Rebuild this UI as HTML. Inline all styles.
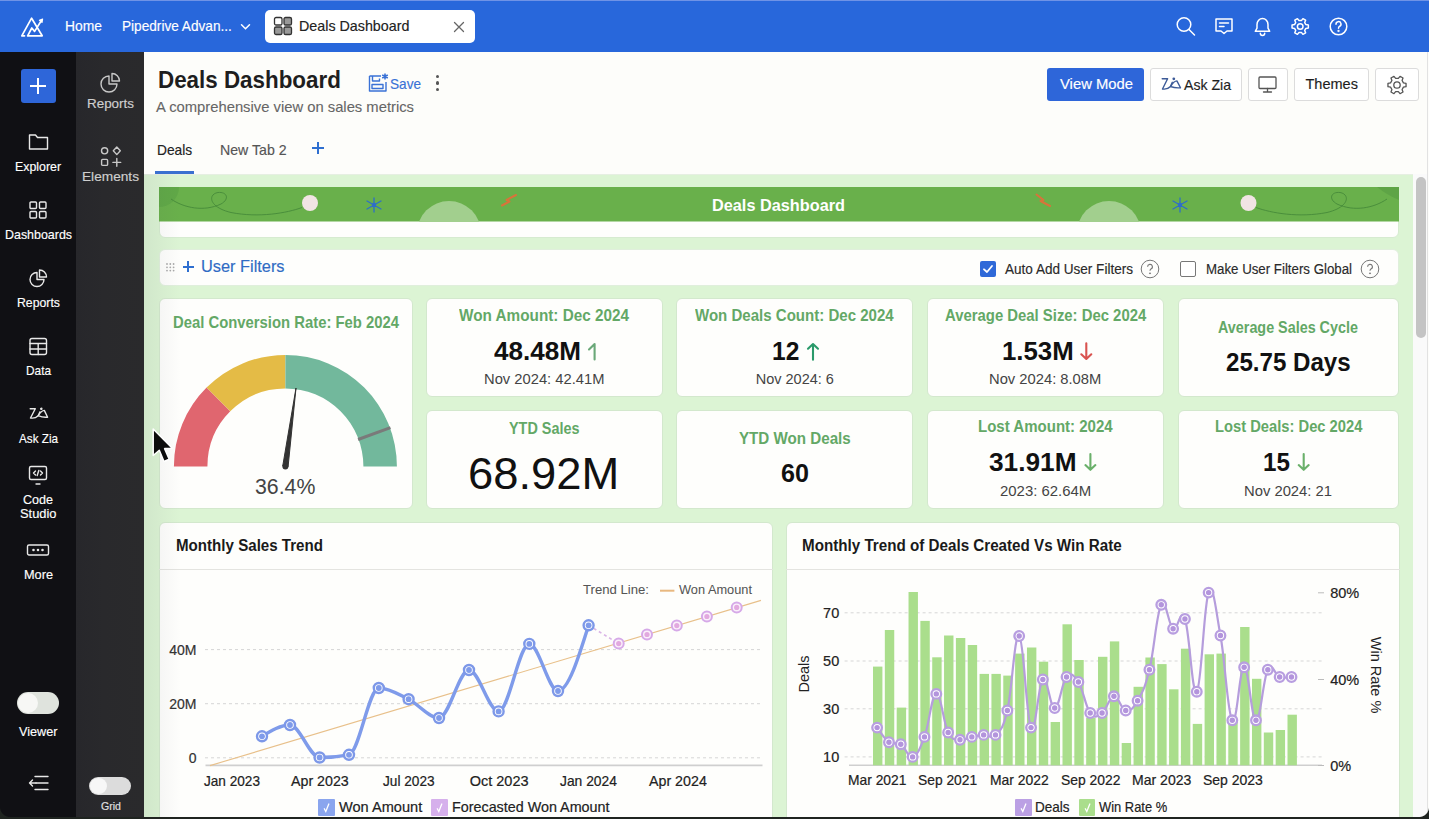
<!DOCTYPE html><html><head><meta charset="utf-8"><style>html,body{margin:0;padding:0;}body{width:1429px;height:819px;overflow:hidden;position:relative;background:#fdfdfa;font-family:"Liberation Sans", sans-serif;}.t{position:absolute;white-space:nowrap;transform-origin:0 0;}svg{position:absolute;overflow:visible;}</style></head><body>
<div style="position:absolute;left:0px;top:0px;width:1429px;height:52px;background:#2867db;"></div>
<div style="position:absolute;left:0px;top:0px;width:1429px;height:1px;background:#6f93e6;"></div>
<svg style="left:0;top:0" width="60" height="52" viewBox="0 0 60 52" fill="none" stroke="#fff" stroke-width="1.7" stroke-linejoin="round" stroke-linecap="round"><path d="M24.5 35.8 H21.8 L31.6 18.2 L42.2 35.8 H27.6 L31.8 28 L34.6 31.4 L40.5 22"/><path d="M39.4 20.3 L42.6 19 L42 22.3 Z" fill="#fff" stroke-width="1.2"/></svg>
<div class="t" style="left:64.50px;top:19.00px;font-size:14.20px;line-height:14.20px;color:#fff;transform:scaleX(0.9766);-webkit-text-stroke:0.15px #fff;">Home</div>
<div class="t" style="left:122.00px;top:19.00px;font-size:14.20px;line-height:14.20px;color:#fff;transform:scaleX(0.9608);-webkit-text-stroke:0.15px #fff;">Pipedrive Advan...</div>
<svg style="left:240px;top:23px" width="11" height="8" viewBox="0 0 11 8" fill="none" stroke="#fff" stroke-width="1.5" stroke-linecap="round"><path d="M1.5 1.8 L5.5 5.8 L9.5 1.8"/></svg>
<div style="position:absolute;left:265px;top:10px;width:210px;height:33px;background:#fff;border-radius:5px;"></div>
<svg style="left:273px;top:16px" width="21" height="21" viewBox="0 0 21 21" stroke="#333" stroke-width="1.3"><rect x="1.5" y="1.5" width="7.5" height="7.5" rx="1.6" fill="#fff"/><rect x="11" y="1.5" width="7.5" height="7.5" rx="1.6" fill="#999"/><rect x="1.5" y="11" width="7.5" height="7.5" rx="1.6" fill="#999"/><rect x="11" y="11" width="7.5" height="7.5" rx="1.6" fill="#999"/></svg>
<div class="t" style="left:299.30px;top:19.00px;font-size:14.20px;line-height:14.20px;color:#222;transform:scaleX(1.0069);-webkit-text-stroke:0.15px #222;">Deals Dashboard</div>
<svg style="left:453px;top:21px" width="12" height="12" viewBox="0 0 12 12" stroke="#666" stroke-width="1.3" stroke-linecap="round"><path d="M1.5 1.5 L10.5 10.5 M10.5 1.5 L1.5 10.5"/></svg>
<svg style="left:1170px;top:10px" width="190" height="34" viewBox="0 0 190 34" fill="none" stroke="#fff" stroke-width="1.5" stroke-linecap="round" stroke-linejoin="round"><circle cx="14" cy="14.5" r="6.8"/><path d="M19 19.5 L24.5 25"/><path d="M46 9 H62 V21 H57 L54 23.5 L51 21 H46 Z"/><path d="M49.5 13 H58.5 M49.5 16.5 H54"/><path d="M85.3 21.3 H99.7 L98 18.2 V14.5 A5.5 5.9 0 0 0 87 14.5 V18.2 Z"/><path d="M90.3 23.3 A2.2 2.2 0 0 0 94.7 23.3"/><path d="M135.89 14.59 L138.35 14.94 L138.35 18.06 L135.89 18.41 L134.70 20.47 L135.62 22.78 L132.93 24.34 L131.39 22.38 L129.01 22.38 L127.47 24.34 L124.78 22.78 L125.70 20.47 L124.51 18.41 L122.05 18.06 L122.05 14.94 L124.51 14.59 L125.70 12.53 L124.78 10.22 L127.47 8.66 L129.01 10.62 L131.39 10.62 L132.93 8.66 L135.62 10.22 L134.70 12.53 Z"/><circle cx="130.2" cy="16.5" r="2.8"/><circle cx="168.5" cy="16.5" r="8.3"/><path d="M166 14.2 A2.5 2.5 0 1 1 169.5 16.4 C168.7 16.9 168.5 17.3 168.5 18.3"/><circle cx="168.5" cy="21" r="0.4" fill="#fff"/></svg>
<div style="position:absolute;left:0px;top:52px;width:76px;height:767px;background:#101014;"></div>
<div style="position:absolute;left:76px;top:52px;width:68px;height:767px;background:linear-gradient(to right,#27272b,#29292c 40%,#2a2a2c);"></div>
<div style="position:absolute;left:21px;top:69px;width:35px;height:34px;background:#2e66d9;border-radius:3px;"></div>
<div style="position:absolute;left:30px;top:85px;width:16px;height:2px;background:#fff;"></div>
<div style="position:absolute;left:37px;top:78px;width:2px;height:16px;background:#fff;"></div>
<svg style="left:28px;top:133px" width="21" height="18" viewBox="0 0 21 18" fill="none" stroke="#e8e8e8" stroke-width="1.4" stroke-linejoin="round" stroke-linecap="round"><path d="M1.5 2 H7.5 L9.5 4.5 H19.5 V16 H1.5 Z"/></svg>
<div class="t" style="left:15.00px;top:160.00px;font-size:13.00px;line-height:13.00px;color:#fff;transform:scaleX(0.9503);-webkit-text-stroke:0.15px #fff;">Explorer</div>
<svg style="left:28px;top:200px" width="21" height="21" viewBox="0 0 21 21" fill="none" stroke="#e8e8e8" stroke-width="1.4" stroke-linejoin="round" stroke-linecap="round"><rect x="2" y="2" width="6.5" height="6.5" rx="1"/><rect x="11.5" y="2" width="6.5" height="6.5" rx="1"/><rect x="2" y="11.5" width="6.5" height="6.5" rx="1"/><rect x="11.5" y="11.5" width="6.5" height="6.5" rx="1"/></svg>
<div class="t" style="left:4.50px;top:228.00px;font-size:13.00px;line-height:13.00px;color:#fff;transform:scaleX(0.9558);-webkit-text-stroke:0.15px #fff;">Dashboards</div>
<svg style="left:28px;top:268px" width="21" height="21" viewBox="0 0 21 21" fill="none" stroke="#e8e8e8" stroke-width="1.4" stroke-linejoin="round" stroke-linecap="round"><path d="M9 4.5 A7 7 0 1 0 16 11.5 H9 Z"/><path d="M11.5 2 A7 7 0 0 1 18.5 9 H11.5 Z"/></svg>
<div class="t" style="left:16.50px;top:296.00px;font-size:13.00px;line-height:13.00px;color:#fff;transform:scaleX(0.9447);-webkit-text-stroke:0.15px #fff;">Reports</div>
<svg style="left:28px;top:336px" width="21" height="21" viewBox="0 0 21 21" fill="none" stroke="#e8e8e8" stroke-width="1.4" stroke-linejoin="round" stroke-linecap="round"><rect x="2" y="2.5" width="16.5" height="16" rx="2"/><path d="M2 7.5 H18.5 M2 13 H18.5 M10.2 7.5 V18.5"/></svg>
<div class="t" style="left:25.50px;top:364.00px;font-size:13.00px;line-height:13.00px;color:#fff;transform:scaleX(0.9104);-webkit-text-stroke:0.15px #fff;">Data</div>
<svg style="left:28px;top:405px" width="22" height="16" viewBox="0 0 22 16" fill="none" stroke="#e8e8e8" stroke-width="1.4" stroke-linejoin="round" stroke-linecap="round"><path d="M2.2 3.7 H7.3 L2.5 13 C5 13.4 8.3 12.6 10.2 10.7 L12 6.8"/><circle cx="13.3" cy="3.8" r="0.6" fill="#e8e8e8"/><path d="M10.2 10.7 Q13.5 5.5 16.3 5.4 Q17.8 8.5 19.6 12.2 Q14.5 12.6 10.2 10.7"/></svg>
<div class="t" style="left:18.50px;top:432.00px;font-size:13.00px;line-height:13.00px;color:#fff;transform:scaleX(0.8998);-webkit-text-stroke:0.15px #fff;">Ask Zia</div>
<svg style="left:27px;top:464px" width="22" height="22" viewBox="0 0 22 22" fill="none" stroke="#e8e8e8" stroke-width="1.4" stroke-linejoin="round" stroke-linecap="round"><rect x="2.5" y="2.5" width="17" height="13" rx="1.5"/><path d="M9 20 H13"/><path d="M8.5 7 L6.5 9 L8.5 11 M13.5 7 L15.5 9 L13.5 11 M11.8 6.5 L10.2 11.5"/></svg>
<div class="t" style="left:23.00px;top:493.00px;font-size:13.00px;line-height:13.00px;color:#fff;transform:scaleX(0.9653);-webkit-text-stroke:0.15px #fff;">Code</div>
<div class="t" style="left:19.75px;top:507.00px;font-size:13.00px;line-height:13.00px;color:#fff;transform:scaleX(0.9902);-webkit-text-stroke:0.15px #fff;">Studio</div>
<svg style="left:26px;top:543px" width="24" height="14" viewBox="0 0 24 14" fill="none" stroke="#e8e8e8" stroke-width="1.4" stroke-linejoin="round" stroke-linecap="round"><rect x="1.5" y="2" width="21" height="10" rx="1.5"/><circle cx="7.5" cy="7" r="0.6" fill="#e8e8e8"/><circle cx="12" cy="7" r="0.6" fill="#e8e8e8"/><circle cx="16.5" cy="7" r="0.6" fill="#e8e8e8"/></svg>
<div class="t" style="left:23.50px;top:568.00px;font-size:13.00px;line-height:13.00px;color:#fff;transform:scaleX(0.9791);-webkit-text-stroke:0.15px #fff;">More</div>
<div style="position:absolute;left:17px;top:692px;width:42px;height:22px;background:#dfe3dd;border-radius:11px;"></div>
<div style="position:absolute;left:18px;top:693px;width:20px;height:20px;background:#f7f7f5;border-radius:50%;"></div>
<div class="t" style="left:18.75px;top:725.00px;font-size:13.00px;line-height:13.00px;color:#fff;transform:scaleX(0.9746);-webkit-text-stroke:0.15px #fff;">Viewer</div>
<svg style="left:27px;top:774px" width="24" height="18" viewBox="0 0 24 18" fill="none" stroke="#e8e8e8" stroke-width="1.4" stroke-linejoin="round" stroke-linecap="round"><path d="M8 2.5 H21 M9 9 H21 M8 15.5 H21"/><path d="M5.5 6 L2.5 9 L5.5 12 M2.5 9 H9"/></svg>
<svg style="left:99px;top:71px" width="24" height="23" viewBox="0 0 24 23" fill="none" stroke="#c8c8c8" stroke-width="1.4" stroke-linejoin="round" stroke-linecap="round"><path d="M10 5 A8 8 0 1 0 18 13 H10 Z"/><path d="M13 2.5 A7.5 7.5 0 0 1 20.5 10 H13 Z"/></svg>
<div class="t" style="left:87.00px;top:97.00px;font-size:13.00px;line-height:13.00px;color:#cfcfcf;transform:scaleX(1.0325);-webkit-text-stroke:0.15px #cfcfcf;">Reports</div>
<svg style="left:99px;top:145px" width="24" height="23" viewBox="0 0 24 23" fill="none" stroke="#c8c8c8" stroke-width="1.4" stroke-linejoin="round" stroke-linecap="round"><circle cx="5.6" cy="5.8" r="3.1"/><path d="M17.8 2 L21.3 5.8 L17.8 9.6 L14.3 5.8 Z"/><rect x="2.6" y="14.4" width="6" height="6" rx="1"/><path d="M17.8 13.5 V21.3 M13.9 17.4 H21.7"/></svg>
<div class="t" style="left:82.00px;top:170.00px;font-size:13.00px;line-height:13.00px;color:#cfcfcf;transform:scaleX(1.0519);-webkit-text-stroke:0.15px #cfcfcf;">Elements</div>
<div style="position:absolute;left:89px;top:777px;width:42px;height:18px;background:#dcdcdc;border-radius:9px;"></div>
<div style="position:absolute;left:90px;top:778px;width:17px;height:16px;background:#f7f7f7;border-radius:50%;"></div>
<div class="t" style="left:100.50px;top:801.00px;font-size:10.50px;line-height:10.50px;color:#e0e0e0;transform:scaleX(1.0083);-webkit-text-stroke:0.15px #e0e0e0;">Grid</div>
<div class="t" style="left:157.50px;top:69.00px;font-size:23.20px;line-height:23.20px;font-weight:bold;color:#1e1e1e;transform:scaleX(0.9654);">Deals Dashboard</div>
<div class="t" style="left:156.00px;top:100.00px;font-size:14.50px;line-height:14.50px;color:#666;transform:scaleX(1.0196);-webkit-text-stroke:0.10px #666;">A comprehensive view on sales metrics</div>
<svg style="left:367px;top:72px" width="22" height="21" viewBox="0 0 22 21" fill="none" stroke="#3a72d6" stroke-width="1.4" stroke-linejoin="round"><path d="M2.5 4 H14 M2.5 4 V19 H19 V10"/><path d="M5.5 4 V9 H12.5 V6.5"/><rect x="5" y="12.5" width="11" height="4"/><path d="M18 1.5 V7.5 M15.2 3 L20.8 6 M20.8 3 L15.2 6" stroke-width="1.6"/></svg>
<div class="t" style="left:390.40px;top:77.00px;font-size:14.50px;line-height:14.50px;color:#3a72d6;transform:scaleX(0.9380);-webkit-text-stroke:0.15px #3a72d6;">Save</div>
<div style="position:absolute;left:435.6px;top:74.5px;width:3.6px;height:3.6px;background:#555;border-radius:50%;"></div>
<div style="position:absolute;left:435.6px;top:81.0px;width:3.6px;height:3.6px;background:#555;border-radius:50%;"></div>
<div style="position:absolute;left:435.6px;top:87.5px;width:3.6px;height:3.6px;background:#555;border-radius:50%;"></div>
<div style="position:absolute;left:1047px;top:68px;width:97px;height:33px;background:#2e66d9;border-radius:3px;"></div>
<div class="t" style="left:1059.60px;top:77.00px;font-size:14.50px;line-height:14.50px;color:#fff;transform:scaleX(1.0215);-webkit-text-stroke:0.15px #fff;">View Mode</div>
<div style="position:absolute;left:1150px;top:68px;width:92px;height:33px;box-sizing:border-box;border:1px solid #dcdcdc;border-radius:3px;background:#fff;"></div>
<svg style="left:1160px;top:76px" width="22" height="16" viewBox="0 0 22 16" fill="none" stroke="#3d5b98" stroke-width="1.4" stroke-linejoin="round" stroke-linecap="round"><path d="M2.2 2.7 H7.6 L2.5 13 C5 13.4 8.5 12.6 10.5 10.5 L12.3 6.3"/><circle cx="13.8" cy="2.8" r="0.7" fill="#3d5b98"/><path d="M10.5 10.5 Q14 5 16.9 4.9 Q18.5 8 20.5 11.8 Q15 12.3 10.5 10.5"/></svg>
<div class="t" style="left:1184.00px;top:78.00px;font-size:14.50px;line-height:14.50px;color:#1e1e1e;transform:scaleX(0.9722);-webkit-text-stroke:0.15px #1e1e1e;">Ask Zia</div>
<div style="position:absolute;left:1248px;top:68px;width:40px;height:33px;box-sizing:border-box;border:1px solid #dcdcdc;border-radius:3px;background:#fff;"></div>
<svg style="left:1257px;top:75px" width="22" height="20" viewBox="0 0 22 20" fill="none" stroke="#555" stroke-width="1.3" stroke-linecap="round"><rect x="2" y="2" width="17" height="11.5" rx="1"/><path d="M10.5 13.5 V16.5 M6.5 17 H14.5"/></svg>
<div style="position:absolute;left:1294px;top:68px;width:75px;height:33px;box-sizing:border-box;border:1px solid #dcdcdc;border-radius:3px;background:#fff;"></div>
<div class="t" style="left:1305.50px;top:77.00px;font-size:14.50px;line-height:14.50px;color:#1e1e1e;-webkit-text-stroke:0.15px #1e1e1e;">Themes</div>
<div style="position:absolute;left:1375px;top:68px;width:44px;height:33px;box-sizing:border-box;border:1px solid #dcdcdc;border-radius:3px;background:#fff;"></div>
<svg style="left:1385px;top:73px" width="24" height="24" viewBox="0 0 24 24" fill="none" stroke="#555" stroke-width="1.3" stroke-linejoin="round"><path d="M18.44 9.83 L21.04 10.28 L21.04 13.72 L18.44 14.17 L17.10 16.50 L18.01 18.96 L15.03 20.69 L13.34 18.67 L10.66 18.67 L8.97 20.69 L5.99 18.96 L6.90 16.50 L5.56 14.17 L2.96 13.72 L2.96 10.28 L5.56 9.83 L6.90 7.50 L5.99 5.04 L8.97 3.31 L10.66 5.33 L13.34 5.33 L15.03 3.31 L18.01 5.04 L17.10 7.50 Z"/><circle cx="12" cy="12" r="3.2"/></svg>
<div style="position:absolute;left:1427px;top:52px;width:1px;height:767px;background:#e2e2e2;"></div>
<div class="t" style="left:157.30px;top:143.00px;font-size:14.50px;line-height:14.50px;color:#222;transform:scaleX(0.9495);-webkit-text-stroke:0.15px #222;">Deals</div>
<div class="t" style="left:219.90px;top:143.00px;font-size:14.50px;line-height:14.50px;color:#555;transform:scaleX(0.9759);-webkit-text-stroke:0.15px #555;">New Tab 2</div>
<div style="position:absolute;left:311.5px;top:147px;width:12.5px;height:2px;background:#2e6fd0;"></div>
<div style="position:absolute;left:316.7px;top:141.5px;width:2px;height:12.5px;background:#2e6fd0;"></div>
<div style="position:absolute;left:155px;top:171px;width:39px;height:3px;background:#3a70d0;"></div>
<div style="position:absolute;left:144px;top:174px;width:1269px;height:645px;background:#dcf4d4;"></div>
<div style="position:absolute;left:144px;top:174px;width:1269px;height:1px;background:#e6efe2;"></div>
<div style="position:absolute;left:1413px;top:174px;width:14px;height:645px;background:#fafafa;"></div>
<div style="position:absolute;left:1416px;top:177px;width:10px;height:161px;background:#c4c4c4;border-radius:5px;"></div>
<div style="position:absolute;left:159px;top:187px;width:1240px;height:51px;box-sizing:border-box;background:#fefefc;border:1px solid #d3e8cd;border-radius:6px;border-color:#d6ebd0;overflow:hidden;"></div>
<svg style="left:159px;top:187px;overflow:hidden" width="1240" height="34.5" viewBox="0 0 1240 34.5"><rect width="1240" height="34.5" fill="#69b04b"/><path d="M0 0 H20 A20 20 0 0 1 0 20 Z" fill="#60a847"/><path d="M1240 0 H1218 Q1228 8 1240 13 Z" fill="#5ea446"/><path d="M12 12 C25 21 45 25 62 17 C71 12 68 4.5 59 5.5 C49 7 49 20 72 25.5 C100 31 128 26 143 20.5" fill="none" stroke="#468a3a" stroke-width="0.9"/><path d="M 1228 12 C 1215 21 1195 25 1178 17 C 1169 12 1172 4.5 1181 5.5 C 1191 7 1191 20 1168 25.5 C 1140 31 1112 26 1097 20.5" fill="none" stroke="#468a3a" stroke-width="0.9"/><circle cx="151" cy="16" r="8" fill="#f1e4e4"/><circle cx="1089.5" cy="16" r="8" fill="#f1e4e4"/><circle cx="290" cy="46" r="32" fill="#a2cf8e"/><circle cx="950" cy="46" r="32" fill="#a2cf8e"/><g stroke="#2f6ec8" stroke-width="1.3" stroke-linecap="round"><path d="M215 11 V25 M208 14 L222 22 M222 14 L208 22"/><circle cx="215" cy="18" r="2.3" fill="#2f6ec8" stroke="none"/></g><g stroke="#2f6ec8" stroke-width="1.3" stroke-linecap="round"><path d="M1021 11 V25 M1014 14 L1028 22 M1028 14 L1014 22"/><circle cx="1021" cy="18" r="2.3" fill="#2f6ec8" stroke="none"/></g><path d="M343 18.5 L350.5 14.5 L347.5 13 L357 8" fill="none" stroke="#d8733a" stroke-width="2" stroke-linecap="round" stroke-linejoin="round"/><path d="M877.5 7.5 L884.5 13 L881.5 14 L891 19" fill="none" stroke="#d8733a" stroke-width="2" stroke-linecap="round" stroke-linejoin="round"/></svg>
<div class="t" style="left:712.00px;top:197.00px;font-size:17.00px;line-height:17.00px;font-weight:bold;color:#fff;transform:scaleX(0.9577);">Deals Dashboard</div>
<div style="position:absolute;left:159px;top:249px;width:1240px;height:37px;box-sizing:border-box;background:#fefefc;border:1px solid #d3e8cd;border-radius:6px;border-color:#e0efdc;"></div>
<svg style="left:165px;top:262px" width="12" height="11" viewBox="0 0 12 11" fill="#aaa"><circle cx="2.0" cy="2.0" r="0.9"/><circle cx="2.0" cy="5.3" r="0.9"/><circle cx="2.0" cy="8.6" r="0.9"/><circle cx="5.3" cy="2.0" r="0.9"/><circle cx="5.3" cy="5.3" r="0.9"/><circle cx="5.3" cy="8.6" r="0.9"/><circle cx="8.6" cy="2.0" r="0.9"/><circle cx="8.6" cy="5.3" r="0.9"/><circle cx="8.6" cy="8.6" r="0.9"/></svg>
<div style="position:absolute;left:183px;top:265.5px;width:10.5px;height:2px;background:#2e6fd0;"></div>
<div style="position:absolute;left:187.2px;top:261px;width:2px;height:11px;background:#2e6fd0;"></div>
<div class="t" style="left:200.50px;top:259.00px;font-size:16.00px;line-height:16.00px;color:#2f6bc4;transform:scaleX(1.0210);-webkit-text-stroke:0.15px #2f6bc4;">User Filters</div>
<div style="position:absolute;left:980px;top:261px;width:16px;height:16px;background:#2f69d8;border-radius:2px;"></div>
<svg style="left:980px;top:261px" width="16" height="16" viewBox="0 0 16 16" fill="none" stroke="#fff" stroke-width="1.8" stroke-linecap="round" stroke-linejoin="round"><path d="M4 8.3 L7 11 L12 5"/></svg>
<div class="t" style="left:1005.40px;top:262.00px;font-size:14.00px;line-height:14.00px;color:#2a2a2a;transform:scaleX(0.9677);-webkit-text-stroke:0.15px #2a2a2a;">Auto Add User Filters</div>
<svg style="left:1140px;top:259px" width="20" height="20" viewBox="0 0 20 20" fill="none" stroke="#777" stroke-width="1"><circle cx="10" cy="10" r="8.8"/><path d="M7.6 7.8 A2.4 2.4 0 1 1 10.9 10 C10.2 10.4 10 10.8 10 11.8" stroke-width="1.1"/><circle cx="10" cy="14.3" r="0.5" fill="#777"/></svg>
<div style="position:absolute;left:1180px;top:261px;width:16px;height:16px;box-sizing:border-box;border:1px solid #777;border-radius:2px;background:#fff;"></div>
<div class="t" style="left:1206.40px;top:262.00px;font-size:14.00px;line-height:14.00px;color:#2a2a2a;transform:scaleX(0.9478);-webkit-text-stroke:0.15px #2a2a2a;">Make User Filters Global</div>
<svg style="left:1360px;top:259px" width="20" height="20" viewBox="0 0 20 20" fill="none" stroke="#777" stroke-width="1"><circle cx="10" cy="10" r="8.8"/><path d="M7.6 7.8 A2.4 2.4 0 1 1 10.9 10 C10.2 10.4 10 10.8 10 11.8" stroke-width="1.1"/><circle cx="10" cy="14.3" r="0.5" fill="#777"/></svg>
<div style="position:absolute;left:426px;top:298px;width:237px;height:98.6px;box-sizing:border-box;background:#fefefc;border:1px solid #d3e8cd;border-radius:6px;"></div>
<div style="position:absolute;left:426px;top:410px;width:237px;height:98.6px;box-sizing:border-box;background:#fefefc;border:1px solid #d3e8cd;border-radius:6px;"></div>
<div style="position:absolute;left:676px;top:298px;width:237px;height:98.6px;box-sizing:border-box;background:#fefefc;border:1px solid #d3e8cd;border-radius:6px;"></div>
<div style="position:absolute;left:676px;top:410px;width:237px;height:98.6px;box-sizing:border-box;background:#fefefc;border:1px solid #d3e8cd;border-radius:6px;"></div>
<div style="position:absolute;left:927px;top:298px;width:237px;height:98.6px;box-sizing:border-box;background:#fefefc;border:1px solid #d3e8cd;border-radius:6px;"></div>
<div style="position:absolute;left:927px;top:410px;width:237px;height:98.6px;box-sizing:border-box;background:#fefefc;border:1px solid #d3e8cd;border-radius:6px;"></div>
<div style="position:absolute;left:1178px;top:298px;width:221px;height:98.6px;box-sizing:border-box;background:#fefefc;border:1px solid #d3e8cd;border-radius:6px;"></div>
<div style="position:absolute;left:1178px;top:410px;width:221px;height:98.6px;box-sizing:border-box;background:#fefefc;border:1px solid #d3e8cd;border-radius:6px;"></div>
<div style="position:absolute;left:159px;top:298px;width:254px;height:210.6px;box-sizing:border-box;background:#fefefc;border:1px solid #d3e8cd;border-radius:6px;"></div>
<div class="t" style="left:459.10px;top:307.00px;font-size:17.00px;line-height:17.00px;font-weight:bold;color:#63a866;transform:scaleX(0.8999);">Won Amount: Dec 2024</div>
<div class="t" style="left:493.70px;top:339.00px;font-size:25.50px;line-height:25.50px;font-weight:bold;color:#111;transform:scaleX(1.0229);">48.48M</div>
<svg style="left:0;top:0" width="1" height="1"><path d="M594.6 359.5 V344 L589 349.5" fill="none" stroke="#6aa878" stroke-width="2.1" stroke-linecap="round" stroke-linejoin="round"/></svg>
<div class="t" style="left:483.70px;top:372.00px;font-size:14.50px;line-height:14.50px;color:#444;transform:scaleX(1.0161);">Nov 2024: 42.41M</div>
<div class="t" style="left:695.20px;top:307.00px;font-size:17.00px;line-height:17.00px;font-weight:bold;color:#63a866;transform:scaleX(0.8850);">Won Deals Count: Dec 2024</div>
<div class="t" style="left:772.20px;top:339.00px;font-size:25.50px;line-height:25.50px;font-weight:bold;color:#111;transform:scaleX(0.9625);">12</div>
<svg style="left:0;top:0" width="1" height="1"><path d="M813.0 359.8 V344.2 M808.0 348.7 L813.0 344.0 L818.0 348.7" fill="none" stroke="#2a9a6a" stroke-width="2.1" stroke-linecap="round" stroke-linejoin="round"/></svg>
<div class="t" style="left:755.70px;top:372.00px;font-size:14.50px;line-height:14.50px;color:#444;">Nov 2024: 6</div>
<div class="t" style="left:944.70px;top:307.00px;font-size:17.00px;line-height:17.00px;font-weight:bold;color:#63a866;transform:scaleX(0.8750);">Average Deal Size: Dec 2024</div>
<div class="t" style="left:1001.70px;top:339.00px;font-size:25.50px;line-height:25.50px;font-weight:bold;color:#111;transform:scaleX(1.0117);">1.53M</div>
<svg style="left:0;top:0" width="1" height="1"><path d="M1086.3 343.2 V358.8 M1081.3 354.3 L1086.3 359.0 L1091.3 354.3" fill="none" stroke="#d9534f" stroke-width="2.1" stroke-linecap="round" stroke-linejoin="round"/></svg>
<div class="t" style="left:989.10px;top:372.00px;font-size:14.50px;line-height:14.50px;color:#444;transform:scaleX(1.0170);">Nov 2024: 8.08M</div>
<div class="t" style="left:1218.30px;top:319.00px;font-size:17.00px;line-height:17.00px;font-weight:bold;color:#63a866;transform:scaleX(0.8443);">Average Sales Cycle</div>
<div class="t" style="left:1225.60px;top:349.00px;font-size:26.50px;line-height:26.50px;font-weight:bold;color:#111;transform:scaleX(0.9100);">25.75 Days</div>
<div class="t" style="left:508.80px;top:421.00px;font-size:16.00px;line-height:16.00px;font-weight:bold;color:#63a866;transform:scaleX(0.8996);">YTD Sales</div>
<div class="t" style="left:467.60px;top:451.00px;font-size:45.00px;line-height:45.00px;color:#111;transform:scaleX(1.0080);">68.92M</div>
<div class="t" style="left:738.80px;top:430.00px;font-size:17.00px;line-height:17.00px;font-weight:bold;color:#63a866;transform:scaleX(0.8913);">YTD Won Deals</div>
<div class="t" style="left:781.00px;top:460.00px;font-size:26.00px;line-height:26.00px;font-weight:bold;color:#111;transform:scaleX(0.9682);">60</div>
<div class="t" style="left:977.90px;top:418.00px;font-size:17.00px;line-height:17.00px;font-weight:bold;color:#63a866;transform:scaleX(0.8839);">Lost Amount: 2024</div>
<div class="t" style="left:989.10px;top:450.00px;font-size:25.50px;line-height:25.50px;font-weight:bold;color:#111;transform:scaleX(1.0288);">31.91M</div>
<svg style="left:0;top:0" width="1" height="1"><path d="M1090.4 454.0 V469.6 M1085.4 465.1 L1090.4 469.8 L1095.4 465.1" fill="none" stroke="#6ab06a" stroke-width="2.1" stroke-linecap="round" stroke-linejoin="round"/></svg>
<div class="t" style="left:999.60px;top:484.00px;font-size:14.50px;line-height:14.50px;color:#444;transform:scaleX(1.0296);">2023: 62.64M</div>
<div class="t" style="left:1215.00px;top:418.00px;font-size:17.00px;line-height:17.00px;font-weight:bold;color:#63a866;transform:scaleX(0.8666);">Lost Deals: Dec 2024</div>
<div class="t" style="left:1263.30px;top:450.00px;font-size:25.50px;line-height:25.50px;font-weight:bold;color:#111;transform:scaleX(0.9484);">15</div>
<svg style="left:0;top:0" width="1" height="1"><path d="M1303.7 454.0 V469.6 M1298.7 465.1 L1303.7 469.8 L1308.7 465.1" fill="none" stroke="#6ab06a" stroke-width="2.1" stroke-linecap="round" stroke-linejoin="round"/></svg>
<div class="t" style="left:1244.40px;top:484.00px;font-size:14.50px;line-height:14.50px;color:#444;transform:scaleX(1.0202);">Nov 2024: 21</div>
<div class="t" style="left:172.50px;top:314.00px;font-size:17.00px;line-height:17.00px;font-weight:bold;color:#63a866;transform:scaleX(0.8730);">Deal Conversion Rate: Feb 2024</div>
<svg style="left:0;top:0" width="1" height="1"><path d="M173.90 466.40 A111.5 111.5 0 0 1 206.56 387.56 L230.25 411.25 A78 78 0 0 0 207.40 466.40 Z" fill="#e0666f"/><path d="M206.56 387.56 A111.5 111.5 0 0 1 285.40 354.90 L285.40 388.40 A78 78 0 0 0 230.25 411.25 Z" fill="#e4bb46"/><path d="M285.40 354.90 A111.5 111.5 0 0 1 396.90 466.40 L363.40 466.40 A78 78 0 0 0 285.40 388.40 Z" fill="#72b89c"/><path d="M358.09 439.51 L390.44 427.54" stroke="#7a7a7a" stroke-width="3"/><path d="M288.08 466.76 L296.00 388.00 L282.72 466.04 Z" fill="#333" stroke="#333" stroke-width="1" stroke-linejoin="round"/><circle cx="285.40" cy="466.40" r="3" fill="#333"/></svg>
<div class="t" style="left:255.30px;top:476.00px;font-size:22.50px;line-height:22.50px;color:#444;transform:scaleX(0.9467);">36.4%</div>
<div style="position:absolute;left:159px;top:521.5px;width:614px;height:310px;box-sizing:border-box;background:#fefefc;border:1px solid #d3e8cd;border-radius:6px;"></div>
<div style="position:absolute;left:786px;top:521.5px;width:614px;height:310px;box-sizing:border-box;background:#fefefc;border:1px solid #d3e8cd;border-radius:6px;"></div>
<div style="position:absolute;left:159px;top:569px;width:614px;height:1px;background:#e4e4e0;"></div>
<div style="position:absolute;left:786px;top:569px;width:614px;height:1px;background:#e4e4e0;"></div>
<div class="t" style="left:175.60px;top:538.00px;font-size:16.00px;line-height:16.00px;font-weight:bold;color:#1a1a1a;transform:scaleX(0.9448);">Monthly Sales Trend</div>
<div class="t" style="left:801.80px;top:538.00px;font-size:16.00px;line-height:16.00px;font-weight:bold;color:#1a1a1a;transform:scaleX(0.9492);">Monthly Trend of Deals Created Vs Win Rate</div>
<svg style="left:0;top:0" width="1" height="1"><path d="M205 649.6 H762" stroke="#d6d6d6" stroke-width="1" stroke-dasharray="3 3"/><path d="M205 703.7 H762" stroke="#d6d6d6" stroke-width="1" stroke-dasharray="3 3"/><path d="M205 757.8 H762" stroke="#d6d6d6" stroke-width="1" stroke-dasharray="3 3"/><path d="M205.5 765.4 H762.5" stroke="#cfcfcf" stroke-width="1.6"/><path d="M210 765.6 L761 600.4" stroke="#e8c08a" stroke-width="1.1"/><path d="M262.00 736.30 C271.33 730.65 280.67 725.00 290.00 725.00 C299.87 725.00 309.73 757.50 319.60 757.50 C329.40 757.50 339.20 756.60 349.00 754.80 C358.93 752.98 368.87 688.00 378.80 688.00 C388.73 688.00 398.67 694.27 408.60 699.20 C418.73 704.23 428.87 718.00 439.00 718.00 C449.00 718.00 459.00 670.00 469.00 670.00 C478.87 670.00 488.73 711.40 498.60 711.40 C508.83 711.40 519.07 643.90 529.30 643.90 C538.87 643.90 548.43 691.00 558.00 691.00 C568.20 691.00 578.40 658.15 588.60 625.30" fill="none" stroke="#7f9bea" stroke-width="3.4" stroke-linejoin="round" stroke-linecap="round"/><path d="M588.60 625.30 L618.70 643.60" stroke="#d9b3e6" stroke-width="1.6" stroke-dasharray="3 3"/><circle cx="262.00" cy="736.30" r="5" fill="#fff" stroke="#7d98e8" stroke-width="2.4"/><circle cx="262.00" cy="736.30" r="2.9" fill="#7f9bea"/><circle cx="290.00" cy="725.00" r="5" fill="#fff" stroke="#7d98e8" stroke-width="2.4"/><circle cx="290.00" cy="725.00" r="2.9" fill="#7f9bea"/><circle cx="319.60" cy="757.50" r="5" fill="#fff" stroke="#7d98e8" stroke-width="2.4"/><circle cx="319.60" cy="757.50" r="2.9" fill="#7f9bea"/><circle cx="349.00" cy="754.80" r="5" fill="#fff" stroke="#7d98e8" stroke-width="2.4"/><circle cx="349.00" cy="754.80" r="2.9" fill="#7f9bea"/><circle cx="378.80" cy="688.00" r="5" fill="#fff" stroke="#7d98e8" stroke-width="2.4"/><circle cx="378.80" cy="688.00" r="2.9" fill="#7f9bea"/><circle cx="408.60" cy="699.20" r="5" fill="#fff" stroke="#7d98e8" stroke-width="2.4"/><circle cx="408.60" cy="699.20" r="2.9" fill="#7f9bea"/><circle cx="439.00" cy="718.00" r="5" fill="#fff" stroke="#7d98e8" stroke-width="2.4"/><circle cx="439.00" cy="718.00" r="2.9" fill="#7f9bea"/><circle cx="469.00" cy="670.00" r="5" fill="#fff" stroke="#7d98e8" stroke-width="2.4"/><circle cx="469.00" cy="670.00" r="2.9" fill="#7f9bea"/><circle cx="498.60" cy="711.40" r="5" fill="#fff" stroke="#7d98e8" stroke-width="2.4"/><circle cx="498.60" cy="711.40" r="2.9" fill="#7f9bea"/><circle cx="529.30" cy="643.90" r="5" fill="#fff" stroke="#7d98e8" stroke-width="2.4"/><circle cx="529.30" cy="643.90" r="2.9" fill="#7f9bea"/><circle cx="558.00" cy="691.00" r="5" fill="#fff" stroke="#7d98e8" stroke-width="2.4"/><circle cx="558.00" cy="691.00" r="2.9" fill="#7f9bea"/><circle cx="588.60" cy="625.30" r="5" fill="#fff" stroke="#7d98e8" stroke-width="2.4"/><circle cx="588.60" cy="625.30" r="2.9" fill="#7f9bea"/><circle cx="618.70" cy="643.60" r="5" fill="#fbf0fb" stroke="#d6a9e8" stroke-width="2"/><circle cx="618.70" cy="643.60" r="2.6" fill="#e2a9df"/><circle cx="647.00" cy="634.50" r="5" fill="#fbf0fb" stroke="#d6a9e8" stroke-width="2"/><circle cx="647.00" cy="634.50" r="2.6" fill="#e2a9df"/><circle cx="676.80" cy="625.60" r="5" fill="#fbf0fb" stroke="#d6a9e8" stroke-width="2"/><circle cx="676.80" cy="625.60" r="2.6" fill="#e2a9df"/><circle cx="706.90" cy="616.50" r="5" fill="#fbf0fb" stroke="#d6a9e8" stroke-width="2"/><circle cx="706.90" cy="616.50" r="2.6" fill="#e2a9df"/><circle cx="736.70" cy="607.40" r="5" fill="#fbf0fb" stroke="#d6a9e8" stroke-width="2"/><circle cx="736.70" cy="607.40" r="2.6" fill="#e2a9df"/><path d="M660 590.7 H674.4" stroke="#e8b880" stroke-width="2"/></svg>
<div class="t" style="left:169.27px;top:643.00px;font-size:14.00px;line-height:14.00px;color:#333;-webkit-text-stroke:0.20px #333;">40M</div>
<div class="t" style="left:169.27px;top:697.00px;font-size:14.00px;line-height:14.00px;color:#333;-webkit-text-stroke:0.20px #333;">20M</div>
<div class="t" style="left:188.71px;top:751.00px;font-size:14.00px;line-height:14.00px;color:#333;-webkit-text-stroke:0.20px #333;">0</div>
<div class="t" style="left:204.00px;top:774.00px;font-size:14.50px;line-height:14.50px;color:#222;transform:scaleX(0.9386);-webkit-text-stroke:0.20px #222;">Jan 2023</div>
<div class="t" style="left:291.30px;top:774.00px;font-size:14.50px;line-height:14.50px;color:#222;transform:scaleX(0.9805);-webkit-text-stroke:0.20px #222;">Apr 2023</div>
<div class="t" style="left:383.40px;top:774.00px;font-size:14.50px;line-height:14.50px;color:#222;transform:scaleX(0.9412);-webkit-text-stroke:0.20px #222;">Jul 2023</div>
<div class="t" style="left:469.70px;top:774.00px;font-size:14.50px;line-height:14.50px;color:#222;-webkit-text-stroke:0.20px #222;">Oct 2023</div>
<div class="t" style="left:560.30px;top:774.00px;font-size:14.50px;line-height:14.50px;color:#222;transform:scaleX(0.9537);-webkit-text-stroke:0.20px #222;">Jan 2024</div>
<div class="t" style="left:649.10px;top:774.00px;font-size:14.50px;line-height:14.50px;color:#222;transform:scaleX(0.9822);-webkit-text-stroke:0.20px #222;">Apr 2024</div>
<div class="t" style="left:583.10px;top:583.00px;font-size:13.50px;line-height:13.50px;color:#555;transform:scaleX(0.9736);-webkit-text-stroke:0.05px #555;">Trend Line:</div>
<div class="t" style="left:678.90px;top:583.00px;font-size:13.50px;line-height:13.50px;color:#555;transform:scaleX(0.9475);-webkit-text-stroke:0.05px #555;">Won Amount</div>
<div style="position:absolute;left:318.4px;top:799px;width:16.5px;height:16.5px;background:#8aa5ee;border-radius:1px;"></div>
<svg style="left:318.4px;top:799px" width="17" height="17" viewBox="0 0 17 17" fill="none" stroke="#fff" stroke-width="1.3" stroke-linecap="round"><path d="M6.3 9.8 L7.8 12.5 L10.8 5"/></svg>
<div class="t" style="left:339.30px;top:799.00px;font-size:15.00px;line-height:15.00px;color:#222;transform:scaleX(0.9719);-webkit-text-stroke:0.20px #222;">Won Amount</div>
<div style="position:absolute;left:431.4px;top:799px;width:16.5px;height:16.5px;background:#d6b0ec;border-radius:1px;"></div>
<svg style="left:431.4px;top:799px" width="17" height="17" viewBox="0 0 17 17" fill="none" stroke="#fff" stroke-width="1.3" stroke-linecap="round"><path d="M6.3 9.8 L7.8 12.5 L10.8 5"/></svg>
<div class="t" style="left:452.30px;top:799.00px;font-size:15.00px;line-height:15.00px;color:#222;transform:scaleX(0.9556);-webkit-text-stroke:0.20px #222;">Forecasted Won Amount</div>
<svg style="left:0;top:0" width="1" height="1"><path d="M844.6 612.8 H1322" stroke="#d6d6d6" stroke-width="1" stroke-dasharray="3 3"/><path d="M844.6 661.0 H1322" stroke="#d6d6d6" stroke-width="1" stroke-dasharray="3 3"/><path d="M844.6 708.8 H1322" stroke="#d6d6d6" stroke-width="1" stroke-dasharray="3 3"/><path d="M844.6 756.9 H1322" stroke="#d6d6d6" stroke-width="1" stroke-dasharray="3 3"/><path d="M849 765.3 H1322" stroke="#cfcfcf" stroke-width="1.6"/><path d="M1318 592.8 H1324" stroke="#bbb" stroke-width="1"/><path d="M1318 679.5 H1324" stroke="#bbb" stroke-width="1"/><path d="M1318 765.5 H1324" stroke="#bbb" stroke-width="1"/><rect x="873.00" y="666.60" width="9.4" height="98.70" fill="#aade8c"/><rect x="884.84" y="630.00" width="9.4" height="135.30" fill="#aade8c"/><rect x="896.69" y="707.60" width="9.4" height="57.70" fill="#aade8c"/><rect x="908.53" y="592.00" width="9.4" height="173.30" fill="#aade8c"/><rect x="920.37" y="620.90" width="9.4" height="144.40" fill="#aade8c"/><rect x="932.22" y="657.30" width="9.4" height="108.00" fill="#aade8c"/><rect x="944.06" y="635.50" width="9.4" height="129.80" fill="#aade8c"/><rect x="955.90" y="638.00" width="9.4" height="127.30" fill="#aade8c"/><rect x="967.74" y="645.00" width="9.4" height="120.30" fill="#aade8c"/><rect x="979.59" y="673.90" width="9.4" height="91.40" fill="#aade8c"/><rect x="991.43" y="673.90" width="9.4" height="91.40" fill="#aade8c"/><rect x="1003.27" y="675.60" width="9.4" height="89.70" fill="#aade8c"/><rect x="1015.12" y="653.60" width="9.4" height="111.70" fill="#aade8c"/><rect x="1026.96" y="647.50" width="9.4" height="117.80" fill="#aade8c"/><rect x="1038.80" y="661.70" width="9.4" height="103.60" fill="#aade8c"/><rect x="1050.64" y="722.00" width="9.4" height="43.30" fill="#aade8c"/><rect x="1062.49" y="624.30" width="9.4" height="141.00" fill="#aade8c"/><rect x="1074.33" y="660.00" width="9.4" height="105.30" fill="#aade8c"/><rect x="1086.17" y="717.80" width="9.4" height="47.50" fill="#aade8c"/><rect x="1098.02" y="656.80" width="9.4" height="108.50" fill="#aade8c"/><rect x="1109.86" y="641.40" width="9.4" height="123.90" fill="#aade8c"/><rect x="1121.70" y="743.00" width="9.4" height="22.30" fill="#aade8c"/><rect x="1133.55" y="686.80" width="9.4" height="78.50" fill="#aade8c"/><rect x="1145.39" y="657.50" width="9.4" height="107.80" fill="#aade8c"/><rect x="1157.23" y="664.10" width="9.4" height="101.20" fill="#aade8c"/><rect x="1169.08" y="689.30" width="9.4" height="76.00" fill="#aade8c"/><rect x="1180.92" y="648.70" width="9.4" height="116.60" fill="#aade8c"/><rect x="1192.76" y="723.90" width="9.4" height="41.40" fill="#aade8c"/><rect x="1204.60" y="654.30" width="9.4" height="111.00" fill="#aade8c"/><rect x="1216.45" y="653.60" width="9.4" height="111.70" fill="#aade8c"/><rect x="1228.29" y="719.00" width="9.4" height="46.30" fill="#aade8c"/><rect x="1240.13" y="627.00" width="9.4" height="138.30" fill="#aade8c"/><rect x="1251.98" y="678.80" width="9.4" height="86.50" fill="#aade8c"/><rect x="1263.82" y="732.50" width="9.4" height="32.80" fill="#aade8c"/><rect x="1275.66" y="730.00" width="9.4" height="35.30" fill="#aade8c"/><rect x="1287.50" y="714.70" width="9.4" height="50.60" fill="#aade8c"/><path d="M877.10 727.60 C879.47 730.52 884.20 738.88 888.94 742.20 C893.68 745.52 896.04 741.26 900.78 744.20 C905.52 747.14 907.88 758.36 912.62 756.90 C917.36 755.44 919.72 749.50 924.46 736.90 C929.20 724.30 931.56 694.78 936.30 693.90 C941.04 693.02 943.40 723.32 948.14 732.50 C952.88 741.68 955.24 738.92 959.98 739.80 C964.72 740.68 967.08 737.88 971.82 736.90 C976.56 735.92 978.92 735.30 983.66 734.90 C988.40 734.50 990.76 739.78 995.50 734.90 C1000.24 730.02 1002.60 730.28 1007.34 710.50 C1012.08 690.72 1014.44 632.58 1019.18 636.00 C1023.92 639.42 1026.28 718.90 1031.02 727.60 C1035.76 736.30 1038.12 683.42 1042.86 679.50 C1047.60 675.58 1049.96 708.50 1054.70 708.00 C1059.44 707.50 1061.80 682.20 1066.54 677.00 C1071.28 671.80 1073.64 674.80 1078.38 682.00 C1083.12 689.20 1085.48 706.80 1090.22 713.00 C1094.96 719.20 1097.32 716.34 1102.06 713.00 C1106.80 709.66 1109.16 696.80 1113.90 696.30 C1118.64 695.80 1121.00 709.62 1125.74 710.50 C1130.48 711.38 1132.84 708.86 1137.58 700.70 C1142.32 692.54 1144.68 688.88 1149.42 669.70 C1154.16 650.52 1156.52 613.00 1161.26 604.80 C1166.00 596.60 1168.36 625.86 1173.10 628.70 C1177.84 631.54 1180.20 606.40 1184.94 619.00 C1189.68 631.60 1192.04 696.98 1196.78 691.70 C1201.52 686.42 1203.88 603.84 1208.62 592.60 C1213.36 581.36 1215.72 609.96 1220.46 635.50 C1225.20 661.04 1227.56 713.94 1232.30 720.30 C1237.04 726.66 1239.40 667.30 1244.14 667.30 C1248.88 667.30 1251.24 719.82 1255.98 720.30 C1260.72 720.78 1263.08 678.36 1267.82 669.70 C1272.56 661.04 1274.92 675.54 1279.66 677.00 C1284.40 678.46 1289.13 677.00 1291.50 677.00" fill="none" stroke="#b59ddc" stroke-width="2.2" stroke-linejoin="round"/><circle cx="877.10" cy="727.60" r="4.8" fill="#fff" stroke="#b89ee0" stroke-width="2.3"/><circle cx="877.10" cy="727.60" r="2.7" fill="#b394dc"/><circle cx="888.94" cy="742.20" r="4.8" fill="#fff" stroke="#b89ee0" stroke-width="2.3"/><circle cx="888.94" cy="742.20" r="2.7" fill="#b394dc"/><circle cx="900.78" cy="744.20" r="4.8" fill="#fff" stroke="#b89ee0" stroke-width="2.3"/><circle cx="900.78" cy="744.20" r="2.7" fill="#b394dc"/><circle cx="912.62" cy="756.90" r="4.8" fill="#fff" stroke="#b89ee0" stroke-width="2.3"/><circle cx="912.62" cy="756.90" r="2.7" fill="#b394dc"/><circle cx="924.46" cy="736.90" r="4.8" fill="#fff" stroke="#b89ee0" stroke-width="2.3"/><circle cx="924.46" cy="736.90" r="2.7" fill="#b394dc"/><circle cx="936.30" cy="693.90" r="4.8" fill="#fff" stroke="#b89ee0" stroke-width="2.3"/><circle cx="936.30" cy="693.90" r="2.7" fill="#b394dc"/><circle cx="948.14" cy="732.50" r="4.8" fill="#fff" stroke="#b89ee0" stroke-width="2.3"/><circle cx="948.14" cy="732.50" r="2.7" fill="#b394dc"/><circle cx="959.98" cy="739.80" r="4.8" fill="#fff" stroke="#b89ee0" stroke-width="2.3"/><circle cx="959.98" cy="739.80" r="2.7" fill="#b394dc"/><circle cx="971.82" cy="736.90" r="4.8" fill="#fff" stroke="#b89ee0" stroke-width="2.3"/><circle cx="971.82" cy="736.90" r="2.7" fill="#b394dc"/><circle cx="983.66" cy="734.90" r="4.8" fill="#fff" stroke="#b89ee0" stroke-width="2.3"/><circle cx="983.66" cy="734.90" r="2.7" fill="#b394dc"/><circle cx="995.50" cy="734.90" r="4.8" fill="#fff" stroke="#b89ee0" stroke-width="2.3"/><circle cx="995.50" cy="734.90" r="2.7" fill="#b394dc"/><circle cx="1007.34" cy="710.50" r="4.8" fill="#fff" stroke="#b89ee0" stroke-width="2.3"/><circle cx="1007.34" cy="710.50" r="2.7" fill="#b394dc"/><circle cx="1019.18" cy="636.00" r="4.8" fill="#fff" stroke="#b89ee0" stroke-width="2.3"/><circle cx="1019.18" cy="636.00" r="2.7" fill="#b394dc"/><circle cx="1031.02" cy="727.60" r="4.8" fill="#fff" stroke="#b89ee0" stroke-width="2.3"/><circle cx="1031.02" cy="727.60" r="2.7" fill="#b394dc"/><circle cx="1042.86" cy="679.50" r="4.8" fill="#fff" stroke="#b89ee0" stroke-width="2.3"/><circle cx="1042.86" cy="679.50" r="2.7" fill="#b394dc"/><circle cx="1054.70" cy="708.00" r="4.8" fill="#fff" stroke="#b89ee0" stroke-width="2.3"/><circle cx="1054.70" cy="708.00" r="2.7" fill="#b394dc"/><circle cx="1066.54" cy="677.00" r="4.8" fill="#fff" stroke="#b89ee0" stroke-width="2.3"/><circle cx="1066.54" cy="677.00" r="2.7" fill="#b394dc"/><circle cx="1078.38" cy="682.00" r="4.8" fill="#fff" stroke="#b89ee0" stroke-width="2.3"/><circle cx="1078.38" cy="682.00" r="2.7" fill="#b394dc"/><circle cx="1090.22" cy="713.00" r="4.8" fill="#fff" stroke="#b89ee0" stroke-width="2.3"/><circle cx="1090.22" cy="713.00" r="2.7" fill="#b394dc"/><circle cx="1102.06" cy="713.00" r="4.8" fill="#fff" stroke="#b89ee0" stroke-width="2.3"/><circle cx="1102.06" cy="713.00" r="2.7" fill="#b394dc"/><circle cx="1113.90" cy="696.30" r="4.8" fill="#fff" stroke="#b89ee0" stroke-width="2.3"/><circle cx="1113.90" cy="696.30" r="2.7" fill="#b394dc"/><circle cx="1125.74" cy="710.50" r="4.8" fill="#fff" stroke="#b89ee0" stroke-width="2.3"/><circle cx="1125.74" cy="710.50" r="2.7" fill="#b394dc"/><circle cx="1137.58" cy="700.70" r="4.8" fill="#fff" stroke="#b89ee0" stroke-width="2.3"/><circle cx="1137.58" cy="700.70" r="2.7" fill="#b394dc"/><circle cx="1149.42" cy="669.70" r="4.8" fill="#fff" stroke="#b89ee0" stroke-width="2.3"/><circle cx="1149.42" cy="669.70" r="2.7" fill="#b394dc"/><circle cx="1161.26" cy="604.80" r="4.8" fill="#fff" stroke="#b89ee0" stroke-width="2.3"/><circle cx="1161.26" cy="604.80" r="2.7" fill="#b394dc"/><circle cx="1173.10" cy="628.70" r="4.8" fill="#fff" stroke="#b89ee0" stroke-width="2.3"/><circle cx="1173.10" cy="628.70" r="2.7" fill="#b394dc"/><circle cx="1184.94" cy="619.00" r="4.8" fill="#fff" stroke="#b89ee0" stroke-width="2.3"/><circle cx="1184.94" cy="619.00" r="2.7" fill="#b394dc"/><circle cx="1196.78" cy="691.70" r="4.8" fill="#fff" stroke="#b89ee0" stroke-width="2.3"/><circle cx="1196.78" cy="691.70" r="2.7" fill="#b394dc"/><circle cx="1208.62" cy="592.60" r="4.8" fill="#fff" stroke="#b89ee0" stroke-width="2.3"/><circle cx="1208.62" cy="592.60" r="2.7" fill="#b394dc"/><circle cx="1220.46" cy="635.50" r="4.8" fill="#fff" stroke="#b89ee0" stroke-width="2.3"/><circle cx="1220.46" cy="635.50" r="2.7" fill="#b394dc"/><circle cx="1232.30" cy="720.30" r="4.8" fill="#fff" stroke="#b89ee0" stroke-width="2.3"/><circle cx="1232.30" cy="720.30" r="2.7" fill="#b394dc"/><circle cx="1244.14" cy="667.30" r="4.8" fill="#fff" stroke="#b89ee0" stroke-width="2.3"/><circle cx="1244.14" cy="667.30" r="2.7" fill="#b394dc"/><circle cx="1255.98" cy="720.30" r="4.8" fill="#fff" stroke="#b89ee0" stroke-width="2.3"/><circle cx="1255.98" cy="720.30" r="2.7" fill="#b394dc"/><circle cx="1267.82" cy="669.70" r="4.8" fill="#fff" stroke="#b89ee0" stroke-width="2.3"/><circle cx="1267.82" cy="669.70" r="2.7" fill="#b394dc"/><circle cx="1279.66" cy="677.00" r="4.8" fill="#fff" stroke="#b89ee0" stroke-width="2.3"/><circle cx="1279.66" cy="677.00" r="2.7" fill="#b394dc"/><circle cx="1291.50" cy="677.00" r="4.8" fill="#fff" stroke="#b89ee0" stroke-width="2.3"/><circle cx="1291.50" cy="677.00" r="2.7" fill="#b394dc"/></svg>
<div class="t" style="left:823.07px;top:606.00px;font-size:14.50px;line-height:14.50px;color:#222;-webkit-text-stroke:0.20px #222;">70</div>
<div class="t" style="left:823.07px;top:654.00px;font-size:14.50px;line-height:14.50px;color:#222;-webkit-text-stroke:0.20px #222;">50</div>
<div class="t" style="left:823.07px;top:702.00px;font-size:14.50px;line-height:14.50px;color:#222;-webkit-text-stroke:0.20px #222;">30</div>
<div class="t" style="left:823.07px;top:750.00px;font-size:14.50px;line-height:14.50px;color:#222;-webkit-text-stroke:0.20px #222;">10</div>
<div class="t" style="left:1330.20px;top:586.00px;font-size:14.50px;line-height:14.50px;color:#222;-webkit-text-stroke:0.20px #222;">80%</div>
<div class="t" style="left:1330.20px;top:673.00px;font-size:14.50px;line-height:14.50px;color:#222;-webkit-text-stroke:0.20px #222;">40%</div>
<div class="t" style="left:1330.20px;top:759.00px;font-size:14.50px;line-height:14.50px;color:#222;-webkit-text-stroke:0.20px #222;">0%</div>
<div class="t" style="left:804px;top:674px;font-size:14.5px;line-height:14.5px;color:#222;transform:translate(-50%,-50%) rotate(-90deg);transform-origin:50% 50%;">Deals</div>
<div class="t" style="left:1375.5px;top:675px;font-size:14.5px;line-height:14.5px;color:#222;transform:translate(-50%,-50%) rotate(90deg);transform-origin:50% 50%;">Win Rate %</div>
<div class="t" style="left:847.80px;top:773.00px;font-size:14.50px;line-height:14.50px;color:#222;transform:scaleX(0.9534);-webkit-text-stroke:0.20px #222;">Mar 2021</div>
<div class="t" style="left:918.35px;top:773.00px;font-size:14.50px;line-height:14.50px;color:#222;transform:scaleX(0.9519);-webkit-text-stroke:0.20px #222;">Sep 2021</div>
<div class="t" style="left:990.00px;top:773.00px;font-size:14.50px;line-height:14.50px;color:#222;transform:scaleX(0.9599);-webkit-text-stroke:0.20px #222;">Mar 2022</div>
<div class="t" style="left:1060.75px;top:773.00px;font-size:14.50px;line-height:14.50px;color:#222;transform:scaleX(0.9584);-webkit-text-stroke:0.20px #222;">Sep 2022</div>
<div class="t" style="left:1131.95px;top:773.00px;font-size:14.50px;line-height:14.50px;color:#222;transform:scaleX(0.9681);-webkit-text-stroke:0.20px #222;">Mar 2023</div>
<div class="t" style="left:1202.75px;top:773.00px;font-size:14.50px;line-height:14.50px;color:#222;transform:scaleX(0.9648);-webkit-text-stroke:0.20px #222;">Sep 2023</div>
<div style="position:absolute;left:1015px;top:799px;width:16.5px;height:16.5px;background:#bba0e4;border-radius:1px;"></div>
<svg style="left:1015px;top:799px" width="17" height="17" viewBox="0 0 17 17" fill="none" stroke="#fff" stroke-width="1.3" stroke-linecap="round"><path d="M6.3 9.8 L7.8 12.5 L10.8 5"/></svg>
<div class="t" style="left:1035.10px;top:799.00px;font-size:15.00px;line-height:15.00px;color:#222;transform:scaleX(0.8996);-webkit-text-stroke:0.20px #222;">Deals</div>
<div style="position:absolute;left:1078.5px;top:799px;width:16.5px;height:16.5px;background:#aade8c;border-radius:1px;"></div>
<svg style="left:1078.5px;top:799px" width="17" height="17" viewBox="0 0 17 17" fill="none" stroke="#fff" stroke-width="1.3" stroke-linecap="round"><path d="M6.3 9.8 L7.8 12.5 L10.8 5"/></svg>
<div class="t" style="left:1099.00px;top:799.00px;font-size:15.00px;line-height:15.00px;color:#222;transform:scaleX(0.8612);-webkit-text-stroke:0.20px #222;">Win Rate %</div>
<div style="position:absolute;left:144px;top:174px;width:37px;height:645px;background:linear-gradient(to right, rgba(60,60,80,0.07), rgba(60,60,80,0.045) 40%, rgba(60,60,80,0) 100%);"></div>
<svg style="left:150px;top:426px" width="28" height="42" viewBox="0 0 28 42"><path d="M3.2 3 L3.2 29.5 L9.3 24.2 L14 35.5 L19.2 33.3 L14.6 22.6 L22.3 22.3 Z" fill="#0d0d0d" stroke="#fff" stroke-width="1.5" stroke-linejoin="round"/></svg>
<div style="position:absolute;left:0px;top:817px;width:1429px;height:2px;background:#1f2420;"></div>
<div style="position:absolute;left:0px;top:807px;width:10px;height:10px;background:radial-gradient(circle at 10px 0px, rgba(0,0,0,0) 9.5px, #1f2420 10.5px);"></div>
<div style="position:absolute;left:1419px;top:807px;width:10px;height:10px;background:radial-gradient(circle at 0px 0px, rgba(0,0,0,0) 9.5px, #1f2420 10.5px);"></div>
</body></html>
